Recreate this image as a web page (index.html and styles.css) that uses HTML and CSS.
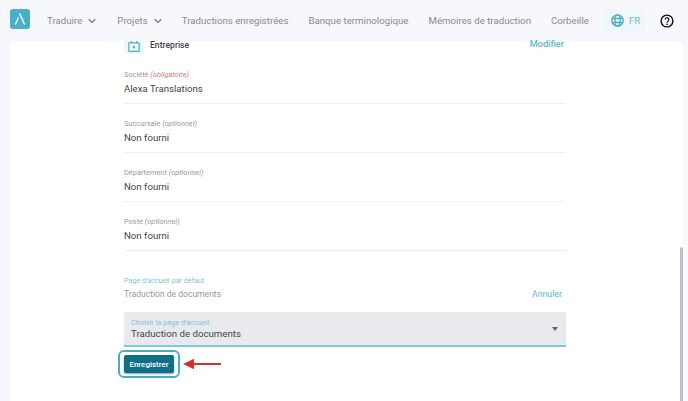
FILE: index.html
```html
<!DOCTYPE html>
<html lang="fr">
<head>
<meta charset="utf-8">
<title>Compte</title>
<link rel="stylesheet" href="styles.css">
</head>
<body>
<header class="nav">
  <div class="logo"><svg width="20" height="20" viewBox="0 0 20 20"><path d="M9.6 4.5 L14.6 15.5 M8.4 8.5 L5.4 15.5" stroke="#fff" stroke-width="1.4" fill="none"/></svg></div>
  <a class="nav-item menu-a">Traduire<svg class="chev" width="8" height="6" viewBox="0 0 8 6"><path d="M.8 1.2 L4 4.4 L7.2 1.2" stroke="#777" stroke-width="1.3" fill="none"/></svg></a>
  <a class="nav-item">Projets<svg class="chev" width="8" height="6" viewBox="0 0 8 6"><path d="M.8 1.2 L4 4.4 L7.2 1.2" stroke="#777" stroke-width="1.3" fill="none"/></svg></a>
  <a class="nav-item">Traductions enregistrées</a>
  <a class="nav-item">Banque terminologique</a>
  <a class="nav-item">Mémoires de traduction</a>
  <a class="nav-item">Corbeille</a>
  <div class="lang">
    <svg width="13" height="13" viewBox="0 0 13 13" fill="none" stroke="#4AAEC2" stroke-width="1.3"><circle cx="6.5" cy="6.5" r="5.7"/><ellipse cx="6.5" cy="6.5" rx="2.6" ry="5.7"/><path d="M1 4.5H12M1 8.5H12"/></svg>
    <span>FR</span>
  </div>
  <svg class="help" width="14" height="14" viewBox="0 0 14 14" fill="none"><circle cx="7" cy="7" r="5.9" stroke="#111" stroke-width="1.4"/><path d="M5.1 5.6a1.9 1.9 0 1 1 2.9 1.6c-.7.4-1 .8-1 1.5" stroke="#111" stroke-width="1.2"/><circle cx="7" cy="10.4" r=".8" fill="#111"/></svg>
</header>
<main class="card">
  <div class="content">
    <div class="head-row">
      <div class="head-left">
        <span class="tile"><svg width="12" height="12" viewBox="0 0 12 12" fill="none" stroke="#4AAEC2" stroke-width="1.2"><rect x=".8" y="1.8" width="10.4" height="8.6" rx=".6"/><path d="M3.4 0V2M8.6 0V2"/><circle cx="6" cy="6.2" r=".6" fill="#4AAEC2"/></svg></span>
        <span class="head-title">Entreprise</span>
      </div>
      <a class="link head-link">Modifier</a>
    </div>
    <section class="field">
      <div class="label">Société <em class="req">(obligatoire)</em></div>
      <div class="value">Alexa Translations</div>
    </section>
    <section class="field">
      <div class="label">Succursale <em>(optionnel)</em></div>
      <div class="value">Non fourni</div>
    </section>
    <section class="field">
      <div class="label">Département <em>(optionnel)</em></div>
      <div class="value">Non fourni</div>
    </section>
    <section class="field">
      <div class="label">Poste <em>(optionnel)</em></div>
      <div class="value">Non fourni</div>
    </section>
    <div class="home-label">Page d'accueil par défaut</div>
    <div class="home-row">
      <span>Traduction de documents</span>
      <a class="link">Annuler</a>
    </div>
    <div class="select">
      <div class="select-label">Choisir la page d'accueil</div>
      <div class="select-value">Traduction de documents</div>
      <span class="caret"></span>
    </div>
    <div class="save-row">
      <span class="ring"><button class="save">Enregistrer</button></span>
      <svg class="arrow" width="38" height="12" viewBox="0 0 38 12"><path d="M38 6H8" stroke="#D9302C" stroke-width="2"/><path d="M0 6 L11 .8 V11.2 Z" fill="#D9302C"/></svg>
    </div>
  </div>
</main>
<div class="scrollbar"></div>
</body>
</html>
```
FILE: styles.css
```css
* { box-sizing: border-box; }
html, body { margin: 0; height: 100%; }
body {
  width: 688px; height: 401px; overflow: hidden; position: relative;
  background: #F6F8FB;
  font-family: Roboto, "Liberation Sans", sans-serif;
  color: #444;
}
.nav { height: 41px; display: flex; align-items: center; padding-left: 10px; }
.logo {
  width: 20px; height: 20px; background: #48AFC4; border-radius: 3px;
  display: flex; margin-top: -4px; margin-right: 17px;
}
.nav-item {
  font-size: 9.7px; color: #8A8A8A; margin-right: 20px; white-space: nowrap;
  display: flex; align-items: center;
}
.chev { margin-left: 6px; }
.nav-item.menu-a { margin-right: 21px; }
.lang {
  width: 41px; height: 24px; background: #F0F6F9; border-radius: 3px;
  display: flex; align-items: center; gap: 5px; padding-left: 7px;
  margin-left: -5px; margin-right: 15px;
  color: #6DBCCD; font-size: 9.7px;
}
.card {
  position: absolute; left: 10px; right: 5px; top: 41px; bottom: 0;
  background: #fff; border-radius: 5px 5px 0 0;
}
.content { width: 442px; margin-left: 114px; }
.head-row { height: 14px; display: flex; justify-content: space-between; }
.head-left { display: flex; align-items: flex-start; }
.tile {
  width: 19px; height: 13px; background: #EDF7F9; border-radius: 0 0 3px 3px;
  display: flex; justify-content: center; overflow: hidden;
}
.head-title { font-size: 8.6px; font-weight: 500; color: #444; margin-left: 7px; line-height: 9px; }
.head-link { font-size: 9.2px; font-weight: 500; margin-right: 2px; line-height: 6px; }
.link { color: #5DB6C9; }
.field { height: 49px; border-bottom: 1px solid #EEEEEE; padding-top: 14px; }
.label { font-size: 7.4px; color: #9A9A9A; line-height: 12px; }
.label em { font-style: italic; }
.label em.req { color: #C8807C; }
.value { font-size: 9.65px; color: #444; line-height: 15px; }
.home-label { font-size: 7.2px; color: #7FC4D3; line-height: 10px; margin-top: 25px; }
.home-row {
  display: flex; justify-content: space-between; align-items: center;
  font-size: 8.55px; color: #999; margin-top: 1px; height: 14px; padding-right: 4px;
}
.home-row .link { font-size: 8.8px; }
.select {
  position: relative; height: 35px; background: #E9EAEE; margin-top: 11px;
  border-bottom: 2px solid #7FC8D8; padding: 6px 7px 0;
  border-radius: 2px 2px 0 0;
}
.select-label { font-size: 7.3px; color: #7FC4D3; line-height: 9px; }
.select-value { font-size: 9.7px; color: #444; line-height: 14px; }
.caret {
  position: absolute; right: 8px; top: 15px; width: 0; height: 0;
  border-left: 3.5px solid transparent; border-right: 3.5px solid transparent;
  border-top: 4px solid #666;
}
.save-row { display: flex; align-items: center; margin-top: 3px; margin-left: -6px; }
.ring {
  display: flex; padding: 3px 4px; border: 2px solid #4AAEC2; border-radius: 6px; background: #fff;
}
.save {
  width: 50px; height: 18px; padding: 0; border: 0; border-radius: 2px;
  background: #0F6F87; color: #fff; font: 500 8px Roboto, sans-serif;
  box-shadow: 0 1px 2px rgba(0,0,0,.4);
}
.arrow { margin-left: 3px; }
.scrollbar {
  position: absolute; right: 5px; top: 247px; bottom: 0; width: 3px; background: #BDBFC4; border-radius: 2px 2px 0 0;
}
```
